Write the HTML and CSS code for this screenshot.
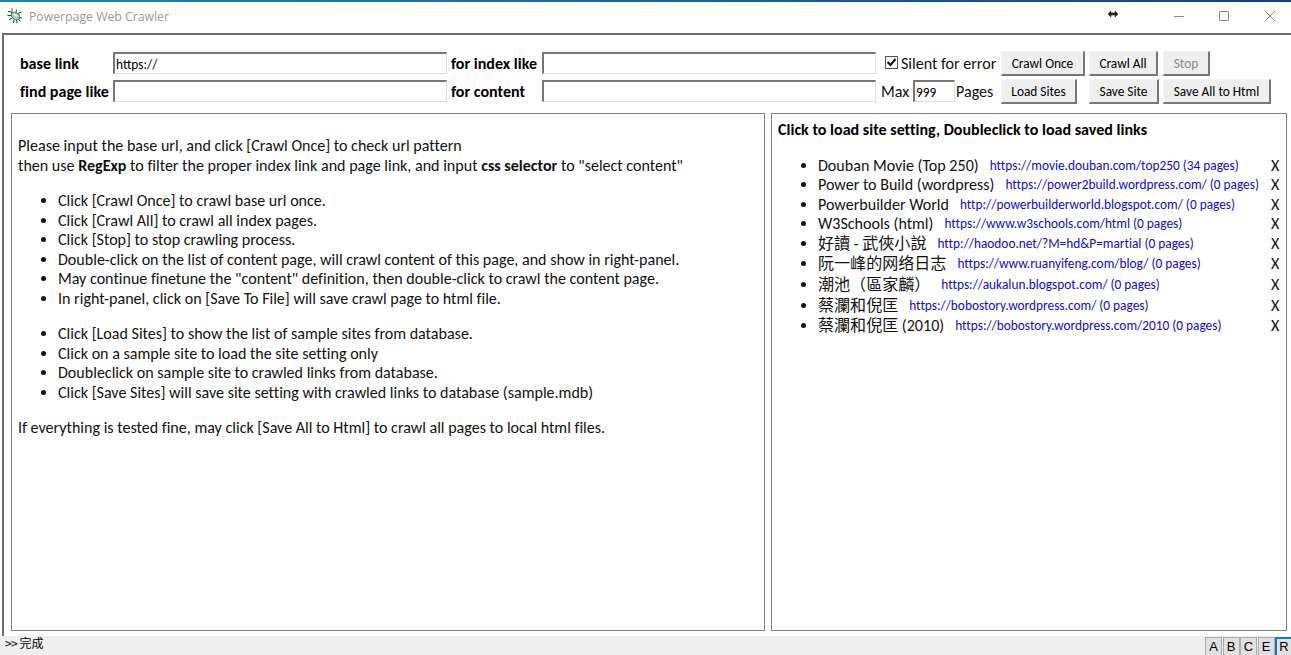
FILE: index.html
```html
<!DOCTYPE html>
<html lang="en">
<head>
<meta charset="utf-8">
<title>Powerpage Web Crawler</title>
<link rel="stylesheet" href="styles.css">
</head>
<body>
<div class="window">
  <header class="titlebar">
    <svg class="bug" width="16" height="16" viewBox="0 0 16 16">
      <path d="M5 .5v3l1.500 1.500M9.500 1.500L9 4M1 3.500h2l2.500 2M.5 7.500h4M2 12l3-2M6.500 15l.5-3M10 15l-.5-3M12 12l1.500 1.500M12 9.500l3 .5M11 5.500L14.500 4" fill="none" stroke="#264438"/>
      <ellipse cx="8.500" cy="8" rx="4.600" ry="3.400" transform="rotate(35 8.500 8)" fill="#a3d6ba" stroke="#3b6e56"/>
      <path d="M6.500 6l3.500 2" stroke="#e2f7eb" stroke-width="1.500"/>
    </svg>
    <span class="title">Powerpage Web Crawler</span>
    <svg class="resize" width="12" height="8" viewBox="0 0 12 8"><path d="M1 4l3-3v2h4V1l3 3-3 3V5H4v2z" fill="#222" stroke="#222" stroke-width=".6"/></svg>
    <svg class="controls" width="104" height="12" viewBox="0 0 104 12" fill="none" stroke="#8a8a8a">
      <path d="M1 6.500h10M46.500 1.500h9v9h-9zM92 1l10 10M102 1L92 11"/>
    </svg>
  </header>
  <main class="client">
    <form class="toolbar">
      <label class="l-base"><span>base link</span></label><input class="field" value="https://">
      <label class="l-index"><span>for index like</span></label><input class="field">
      <div class="opts"><span class="check"><svg width="11" height="11" viewBox="0 0 11 11"><path d="M1.500 5l3 3L9.500 2" fill="none" stroke="#111" stroke-width="2"/></svg></span><span class="silent">Silent for error</span></div>
      <div class="buttons"><button type="button" class="b1">Crawl Once</button><button type="button" class="b2">Crawl All</button><button type="button" class="b3" disabled>Stop</button></div>
      <label class="l-find"><span>find page like</span></label><input class="field">
      <label class="l-content"><span>for content</span></label><input class="field">
      <div class="opts"><span class="max">Max</span><input class="num" value="999"><span class="pages">Pages</span></div>
      <div class="buttons"><button type="button" class="b4">Load Sites</button><button type="button" class="b5">Save Site</button><button type="button" class="b6">Save All to Html</button></div>
    </form>
    <div class="panels">
      <section class="panel help">
        <p><span>Please input the base url, and click [Crawl Once] to check url pattern</span><br><span>then use <b>RegExp</b> to filter the proper index link and page link, and input <b>css selector</b> to "select content"</span></p>
        <ul>
          <li>Click [Crawl Once] to crawl base url once.</li>
          <li>Click [Crawl All] to crawl all index pages.</li>
          <li>Click [Stop] to stop crawling process.</li>
          <li>Double-click on the list of content page, will crawl content of this page, and show in right-panel.</li>
          <li>May continue finetune the "content" definition, then double-click to crawl the content page.</li>
          <li>In right-panel, click on [Save To File] will save crawl page to html file.</li>
        </ul>
        <ul>
          <li>Click [Load Sites] to show the list of sample sites from database.</li>
          <li>Click on a sample site to load the site setting only</li>
          <li>Doubleclick on sample site to crawled links from database.</li>
          <li>Click [Save Sites] will save site setting with crawled links to database (sample.mdb)</li>
        </ul>
        <p>If everything is tested fine, may click [Save All to Html] to crawl all pages to local html files.</p>
      </section>
      <section class="panel sites">
        <b class="heading">Click to load site setting, Doubleclick to load saved links</b>
        <ul>
          <li><div class="row"><span class="name">Douban Movie (Top 250)</span><span class="url">https://movie.douban.com/top250 (34 pages)</span><span class="x">X</span></div></li>
          <li><div class="row"><span class="name">Power to Build (wordpress)</span><span class="url">https://power2build.wordpress.com/ (0 pages)</span><span class="x">X</span></div></li>
          <li><div class="row"><span class="name">Powerbuilder World</span><span class="url">http://powerbuilderworld.blogspot.com/ (0 pages)</span><span class="x">X</span></div></li>
          <li><div class="row"><span class="name">W3Schools (html)</span><span class="url">https://www.w3schools.com/html (0 pages)</span><span class="x">X</span></div></li>
          <li class="cjk"><div class="row"><span class="name">好讀 - 武俠小說</span><span class="url">http://haodoo.net/?M=hd&amp;P=martial (0 pages)</span><span class="x">X</span></div></li>
          <li class="cjk"><div class="row"><span class="name">阮一峰的网络日志</span><span class="url">https://www.ruanyifeng.com/blog/ (0 pages)</span><span class="x">X</span></div></li>
          <li class="cjk"><div class="row"><span class="name">潮池（區家麟）</span><span class="url">https://aukalun.blogspot.com/ (0 pages)</span><span class="x">X</span></div></li>
          <li class="cjk"><div class="row"><span class="name">蔡瀾和倪匡</span><span class="url">https://bobostory.wordpress.com/ (0 pages)</span><span class="x">X</span></div></li>
          <li class="cjk"><div class="row"><span class="name">蔡瀾和倪匡 (2010)</span><span class="url">https://bobostory.wordpress.com/2010 (0 pages)</span><span class="x">X</span></div></li>
        </ul>
      </section>
    </div>
  </main>
  <footer class="status">
    <span class="msg"><span class="arrows">&gt;&gt;</span> 完成</span>
    <div class="keys"><span>A</span><span>B</span><span>C</span><span>E</span><span class="on">R</span></div>
  </footer>
</div>
</body>
</html>
```
FILE: styles.css
```css
* { box-sizing: border-box; }
body { margin: 0; overflow: hidden; background: #fff; color: #111; font: 16.06px/19.5px Carlito, Lato, "Noto Sans CJK TC", sans-serif; font-variant-ligatures: none; white-space: nowrap; }
.window { width: 1291px; height: 655px; display: flex; flex-direction: column; }
.window::before, .window::after { content: ""; flex: none; height: 2px; background: linear-gradient(90deg, #1b86bd, #14408c); }
.window::after { height: 1px; }
.titlebar { flex: none; height: 31px; display: flex; align-items: flex-start; padding: 6px 0 0 7px; }
.title { font: 12.25px/18px "Open Sans", sans-serif; color: #999; margin-left: 6px; width: 1078px; }
.resize { margin: 2px 0 0; flex: none; }
.controls { margin: 2px 0 0 54px; flex: none; }
.client { height: 603px; flex: none; margin-left: 2px; border: 2px solid #6d6d6d; border-right: 0; border-bottom: 0; padding: 15px 0 0 7px; }
.toolbar { display: grid; grid-template-columns: 102px 334px 95px 334px 125px 1fr; grid-template-rows: 28px 28px; align-items: start; }
label { font-weight: bold; color: #000; padding: 4px 0 0 9px; }
.l-index, .l-content { padding-left: 4px; }
.field, .num { font: 13.333px/16px Carlito, Lato, sans-serif; color: #000; border: 2px solid; border-color: #777 #ddd #ddd #777; border-right-width: 1px; border-bottom-width: 1px; height: 22px; padding: 2px 0 0 1px; margin: 2px 0 0; outline: 0; width: 334px; background: #fff; }
.field { height: 21.5px; }
.opts { display: flex; padding: 4px 0 0 5px; }
.opts .num { width: 42px; margin: -2px 1px 0 3px; flex: none; }
.max { width: 29px; }
.check { flex: none; width: 13px; height: 13px; border: 1px solid #555; margin: 2px 3px 0 4px; display: flex; align-items: center; justify-content: center; }
.buttons { display: flex; gap: 4px; }
button { font: 13.333px/16px Carlito, Lato, sans-serif; color: #000; height: 25px; margin: 1px 0 0; padding: 2px 0 0; background: #efefef; border: 1px solid #f5f5f5; border-right: 2px solid #777; border-bottom: 2px solid #777; }
button:disabled { color: #888; }
.b1 { width: 84px; } .b2 { width: 69px; margin-right: 1px; } .b3 { width: 47px; }
.b4 { width: 76px; margin-right: 8px; } .b5 { width: 70px; } .b6 { width: 108px; }
.panels { display: flex; gap: 6px; margin-top: 7px; height: 518px; }
.panel { border: 1px solid #808080; padding: 6px; }
.help { width: 754px; }
.help p { margin: 16px 0; }
.sites { width: 516px; }
.heading { display: block; color: #000; }
ul { margin: 16px 0; padding-left: 40px; }
.cjk { line-height: 20.7px; }
.row { display: flex; }
.name { flex: none; margin-right: 11px; }
.url { font-size: 13.333px; color: #0c0cd0; }
.x { margin-left: auto; width: 9px; }
.status { flex: 1; display: flex; justify-content: space-between; background: #efefef; font: 12px/14px "Noto Sans CJK TC", sans-serif; color: #000; }
.msg { padding-left: 5px; }
.arrows { letter-spacing: -.7px; }
.keys { display: flex; gap: .5px; padding-top: 1px; }
.keys span { width: 17px; border: 1px solid #aaa; border-bottom: 0; background: #e1e1e1; font: 13px/17px "Liberation Sans", sans-serif; text-align: center; }
.keys .on { width: 16px; border: 2px solid #1979b8; border-width: 2px 0 0 2px; line-height: 15px; }
```
